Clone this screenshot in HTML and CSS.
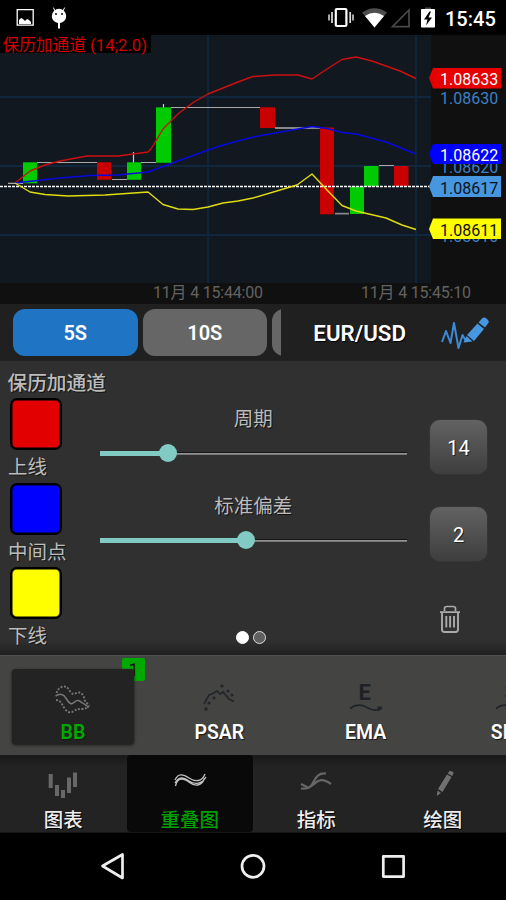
FILE: index.html
```html
<!DOCTYPE html>
<html lang="zh-CN">
<head>
<meta charset="utf-8">
<title>EUR/USD</title>
<link rel="stylesheet" href="styles.css">
</head>
<body>
<div class="app">
  <header class="status">
    <svg class="status-left" width="80" height="35" viewBox="0 0 80 35">
      <path d="M17.2 9.7h16v15.5h-16z" fill="none" stroke="#fff" stroke-width="1.3"/>
      <path d="M19 24v-4l2-2 2 1 2 2 2-2 2 1 2 2v2z" fill="#fff"/>
      <circle cx="59" cy="16" r="7.2" fill="#fff"/>
      <path d="M55 11l-1.6-3.4M63 11l1.6-3.4" stroke="#fff" stroke-width="1"/>
      <path d="M59 22v6.5" stroke="#fff" stroke-width="2"/>
      <path d="M55 14h2M61 14h2" stroke="#111" stroke-width="1.5"/>
    </svg>
    <svg class="status-right" width="112" height="35" viewBox="325 0 112 35">
      <rect x="335.8" y="9" width="10.6" height="17" rx="1" fill="none" stroke="#fff" stroke-width="2.2"/>
      <path d="M332 12v11M350.2 12v11" stroke="#ddd" stroke-width="1.7"/>
      <path d="M329 14.500v6M353 14.500v6" stroke="#ddd" stroke-width="1.5"/>
      <path d="M362 12.500Q374.500 4 387 12.500L374.500 27.500z" fill="#4d4d4d"/>
      <path d="M365 16Q374.500 9.500 384 16L374.500 27.500z" fill="#fff"/>
      <path d="M392.500 26.700H409V10z" fill="none" stroke="#484848" stroke-width="1.7"/>
      <path d="M425 7.500h6V10h-6z" fill="#4d4d4d"/>
      <rect x="421" y="9" width="14" height="18.500" rx=".8" fill="#fff"/>
      <path d="M429.500 11.500l-5.500 8h3.500l-1.500 6 6-8h-3.500l2.500-6z" fill="#000"/>
    </svg>
    <span class="clock">15:45</span>
  </header>

  <svg class="chart" width="506" height="269" viewBox="0 35 506 269">
    <rect y="35" width="506" height="269" fill="#101010"/>
    <rect y="35" width="431" height="248" fill="#111820"/>
    <path d="M0 97H431M0 166H431M0 235H431M208 35V283M416 35V283" stroke="#10273d" stroke-width="1.8"/>
    <rect y="35" width="151" height="18" fill="#000"/>
    <text x="2.500" y="50.500" class="study">保历加通道 (14;2.0)</text>
    <g stroke="#aaa" stroke-width="1.200">
      <path d="M8 183.300H23M37 162.500H97M112 179.500H127M141 162.500H156M171 107.500H260M379 165.500H394"/>
      <path d="M275 128H320M335 213.700H349" stroke="#888" stroke-width="1.800"/>
      <path d="M133.500 152v11M163.500 104v4" stroke="#ccc"/>
    </g>
    <g fill="#00ca00">
      <rect x="23" y="162.300" width="14" height="21"/>
      <rect x="127" y="162.300" width="14" height="17.500"/>
      <rect x="156" y="107.300" width="15" height="55.500"/>
      <rect x="350" y="186.500" width="14" height="27.500"/>
      <rect x="364" y="166" width="14.500" height="20.500"/>
    </g>
    <g fill="#ca0000">
      <rect x="97" y="162.300" width="14.300" height="17.500"/>
      <rect x="260" y="107.300" width="15" height="20.700"/>
      <rect x="320" y="127.500" width="14" height="86.800"/>
      <rect x="394" y="166" width="14.500" height="20.500"/>
    </g>
    <path d="M0 186.500H431" stroke="#fff" stroke-width="1.300" stroke-dasharray="3 1"/>
    <g fill="none" stroke-width="1.400" stroke-linejoin="round">
      <path stroke="#cd1010" d="M15 183L30 171 45 165 60 161 87 156H118L148 152 151 149 163 129 179 113 194 102 208 94 223 88 238 82 253 76.500 275 75H298L312 79 327 69 342 59.500 356 57 372 61 400 71 416 78.500"/>
      <path stroke="#0808df" stroke-width="1.500" d="M15 183L60 178 90 175.500 118 175 148 172 178 161 208 150 223 145 253 137 298 129 312 126.500 327 128.500 342 132.500 356 134 386 142 416 154"/>
      <path stroke="#e0dc0e" d="M15 183L30 192 45 194.500 68 196 105 195 148 192 163 204.500 178 209 193 209.500 208 207 223 203 238 201 253 198 297 185 312 174 327 190 342 205.500 356 211 386 218 402 225 416 229.500"/>
    </g>
    <g class="price" fill="#3c80c4">
      <text x="440" y="104">1.08630</text>
      <text x="440" y="173">1.08620</text>
      <text x="440" y="242">1.08610</text>
    </g>
    <g class="price">
      <path d="M429 78l4-10h68v20.500h-68z" fill="#e60000"/><text x="440" y="85" fill="#fff">1.08633</text>
      <path d="M429 154l4-10h68v20h-68z" fill="#00f"/><text x="440" y="160.500" fill="#fff">1.08622</text>
      <path d="M429 186.500l4-10.500h68v21h-68z" fill="#4696e0"/><text x="440" y="193.500" fill="#0a1420">1.08617</text>
      <path d="M429 229l4-10.500h68V239h-68z" fill="#ff0"/><text x="440" y="236" fill="#101000">1.08611</text>
    </g>
    <g class="axis">
      <text x="153" y="297.500" textLength="110">11月 4 15:44:00</text>
      <text x="361" y="297.500" textLength="110">11月 4 15:45:10</text>
    </g>
  </svg>

  <section class="intervals">
    <div class="choices">
      <div class="interval active">5S</div>
      <div class="interval">10S</div>
      <div class="interval"></div>
    </div>
    <div class="pair">EUR/USD</div>
    <svg width="50" height="40" viewBox="441 312 50 40">
      <path d="M443 341l4-11 4.500 12 3.500-20 4.500 25 4-13 4 7" fill="none" stroke="#3b8bd8" stroke-width="2" stroke-linejoin="round"/>
      <path d="M464.500 341.500l3-6.500 6 5.500z" fill="#4696e0"/>
      <path d="M468 334l10.500-11.500 6.500 5.500-10 12z" fill="#4696e0"/>
      <path d="M479.500 321.500l3.500-4q2-2 5 .5t1 4.500l-3 4z" fill="#4696e0"/>
    </svg>
  </section>

  <main class="panel">
    <h1>保历加通道</h1>
    <div class="settings">
      <div class="colors">
        <div class="swatch red"></div><div class="name">上线</div>
        <div class="swatch blue"></div><div class="name">中间点</div>
        <div class="swatch yellow"></div><div class="name">下线</div>
      </div>
      <div class="sliders">
        <div class="setting">
          <div class="caption">周期</div>
          <div class="track"><div class="fill" style="width:68px"></div><div class="thumb"></div><div class="rest"></div></div>
        </div>
        <div class="setting">
          <div class="caption">标准偏差</div>
          <div class="track"><div class="fill" style="width:146px"></div><div class="thumb"></div><div class="rest"></div></div>
        </div>
        <div class="dots"><i class="on"></i><i></i></div>
      </div>
      <div class="values">
        <div class="value">14</div>
        <div class="value">2</div>
        <svg width="24" height="32" viewBox="437 603 24 32" fill="none" stroke="#aaa">
          <path d="M443.500 611v-2.500q0-2 2.500-2h6q2.500 0 2.500 2v2.500M439 612.200h20" stroke-width="1.700"/>
          <path d="M441 612.500v17q0 2.500 2.500 2.500h11q2.500 0 2.500-2.500v-17" stroke-width="1.900"/>
          <path d="M445.300 616v11.500M449.100 616v11.500M453 616v11.500" stroke-width="1.900"/>
        </svg>
      </div>
    </div>
  </main>

  <section class="studies">
    <div class="badge">1</div>
    <div class="item selected">
      <svg width="40" height="34" viewBox="53 681 40 34" fill="none" stroke="#777">
        <path d="M56.500 692c1-3 3-6 7-6.500s5 3 7.500 6 5 0 8 0 5 4 5.500 7 4 4 4.500 7" stroke-width="1.900" stroke-dasharray="2 1.500"/>
        <path d="M56 699c5 0 6 5 9 9s6 4 9 2 5-2 8-2 4-1 6-2" stroke-width="1.900" stroke-dasharray="2 1.500"/>
        <path d="M55.500 695c5-3 8-2 11 3s5 6 8 3 5-1 8 1 4 2 6 5" stroke-width="1.500"/>
      </svg>
      <span>BB</span>
    </div>
    <div class="item">
      <svg width="40" height="34" viewBox="199 681 40 34">
        <path d="M204 703l5-9 3-1 5-3 3 3 3-2 6 7 5 2.500" fill="none" stroke="#22252a" stroke-width="1.700"/>
        <g fill="#22252a"><circle cx="206" cy="708" r="1.800"/><circle cx="209" cy="702" r="1.600"/><circle cx="214" cy="697" r="1.600"/><circle cx="222" cy="685" r="1.600"/><circle cx="228" cy="690" r="1.600"/><circle cx="232" cy="694" r="1.600"/></g>
      </svg>
      <span>PSAR</span>
    </div>
    <div class="item">
      <svg width="40" height="34" viewBox="345 681 40 34">
        <text x="357.500" y="699" class="letter">E</text>
        <path d="M349 707.500q8-6 17-1t15 .5" fill="none" stroke="#202329" stroke-width="1.700"/>
        <path d="M376 705.500l5.500 0-4 5z" fill="#202329"/>
      </svg>
      <span>EMA</span>
    </div>
    <div class="item">
      <svg width="40" height="34" viewBox="345 681 40 34">
        <text x="357.500" y="699" class="letter">S</text>
        <path d="M349 707.500q8-6 17-1t15 .5" fill="none" stroke="#202329" stroke-width="1.700"/>
      </svg>
      <span>SMA</span>
    </div>
  </section>

  <nav class="tabs">
    <div class="tab">
      <svg width="36" height="32" viewBox="45 769 36 32"><path d="M50.700 774v14M57 785v11M63 790v8M69 777.500v15.500M75 772.500v14.500" stroke="#686868" stroke-width="4"/></svg>
      <span>图表</span>
    </div>
    <div class="tab current">
      <svg width="36" height="32" viewBox="172 769 36 32" fill="none" stroke="#c2c2c2" stroke-width="1.300"><path d="M175 780c3-7 8-6 14-2s13 4 16-4M175 783c4-7 8-6 14-2s13 3 17-4M175.500 786c2-9 8-8 14-3.500s13 3 15-4.500"/></svg>
      <span>重叠图</span>
    </div>
    <div class="tab">
      <svg width="36" height="32" viewBox="298 769 36 32" fill="none" stroke="#666" stroke-width="2.200"><path d="M301 788.500c17 2 9-16 25-15M301 788.500c15 2 14-16 30-4.500M301 784l8 4"/></svg>
      <span>指标</span>
    </div>
    <div class="tab">
      <svg width="36" height="32" viewBox="425 769 36 32" fill="#707070"><path d="M438 789l9-14.500 4.500 2.500-9 15zM447.700 773.500l1.800-2.500q3-.5 4.200 2l-1.500 3zM437.500 790.500l3.500 2.500-4.200 3z"/></svg>
      <span>绘图</span>
    </div>
  </nav>

  <footer class="system">
    <svg width="506" height="67" viewBox="0 833 506 67" fill="none" stroke="#eee" stroke-width="2.700" stroke-linejoin="round">
      <path d="M102.500 866L122.500 854.500V878z"/>
      <circle cx="253" cy="866.300" r="11"/>
      <rect x="383.300" y="856.300" width="20.300" height="20.300"/>
    </svg>
  </footer>
</div>
</body>
</html>
```
FILE: styles.css
```css
* { box-sizing: border-box; }
body { margin: 0; background: #000; font-family: Roboto, "Noto Sans CJK SC", sans-serif; }
svg { display: block; flex: none; }
.app { width: 506px; height: 900px; overflow: hidden; display: flex; flex-direction: column; }
.app > * { flex: none; }

.status { height: 35px; display: flex; align-items: center; color: #fff; }
.status-right { margin-left: 245px; }
.clock { margin: 2px 0 0 8px; font-size: 20px; font-weight: 500; line-height: 24px; }

.study { font-size: 16.7px; fill: #d40000; }
.price { font-size: 16px; }
.axis { font-size: 16px; fill: #636363; }

.intervals { height: 57px; padding: 0 16px 0 13px; background: #202020; display: flex; align-items: center; }
.choices { width: 269px; display: flex; gap: 5px; overflow: hidden; }
.interval { flex: none; width: 124.500px; height: 47px; border-radius: 12px; background: #666; color: #fff; font-size: 20px; font-weight: 600; line-height: 49px; text-align: center; }
.interval.active { background: #2074c4; }
.pair { width: 157px; color: #fff; font-size: 22.300px; font-weight: 600; text-align: center; line-height: 30px; text-shadow: 1px 1px 1px #000; }
.intervals svg { margin-left: 2px; }

.panel { height: 294px; padding: 10px 0 0; background: linear-gradient(#303030 95%, #202020); color: #bcbcbc; }
h1 { margin: 0 0 1px 7.500px; font-size: 19.700px; font-weight: 500; line-height: 26px; text-shadow: 1px 1px 0 #111; }
.settings { display: flex; height: 257px; }
.colors { width: 99.500px; padding-left: 7px; }
.swatch { width: 52px; height: 52px; margin-left: 3px; border: 2.500px solid #000; border-radius: 7px; box-shadow: inset 0 0 0 .5px #000; }
.red { background: #e30000; }
.blue { background: #00f; }
.yellow { background: #ff0; }
.name { height: 32.500px; padding: 2px 0 0 1px; font-size: 19.500px; line-height: 32px; text-shadow: 1px 1px 0 #151515; }
.sliders { width: 307.500px; padding-top: 4px; display: flex; flex-direction: column; }
.setting { height: 87px; }
.caption { height: 31px; padding-top: 1.500px; font-size: 19.500px; line-height: 31px; text-align: center; text-shadow: 1px 1px 0 #111; }
.track { height: 40px; display: flex; align-items: center; }
.fill { height: 5px; background: #82cbc4; }
.thumb { width: 18px; height: 18px; margin: 0 -9px; border-radius: 50%; background: #82cbc4; z-index: 1; }
.rest { flex: 1; height: 2px; background: #929292; border-top: 1px solid #151515; box-shadow: 0 1px #777; }
.dots { display: flex; justify-content: center; gap: 4px; margin-top: 55px; padding-right: 4px; }
.dots i { width: 13px; height: 13px; border: 1.500px solid #ddd; border-radius: 50%; background: #606060; }
.dots .on { background: #fff; border-color: #fff; }
.values { padding: 22px 0 0 23px; }
.value { width: 57px; height: 54px; margin-bottom: 33px; border-radius: 10px; background: linear-gradient(#626262, #3e3e3e); box-shadow: 0 0 1px #666; color: #fff; font-size: 20px; line-height: 56px; text-align: center; text-shadow: 1px 1px 0 #222; }
.values svg { margin: 9px 0 0 8px; padding: 0; }
.value + svg { margin-top: 42px; }

.studies { height: 100px; background: #444542; display: flex; position: relative; padding: 13px 0 0 12px; overflow: hidden; border-top: 1px solid #505050; }
.item { flex: none; width: 122px; height: 75px; margin-right: 24.300px; padding-top: 13px; border-radius: 4px; color: #fff; display: flex; flex-direction: column; align-items: center; position: relative; }
.item span { font-size: 19.500px; font-weight: 600; line-height: 24px; margin-top: 4.500px; text-shadow: 1px 1px 1px #181818; }
.selected { background: #232323; box-shadow: 0 1px 3px #151515; }
.selected span { color: #00a900; }
.badge { position: absolute; left: 122px; top: 2px; width: 23px; height: 23px; border-radius: 2px; background: #00a900; color: #111; font-size: 18px; line-height: 23px; text-align: center; }
.letter { font: 700 22px Roboto, sans-serif; fill: #1e2125; }

.tabs { height: 78px; background: linear-gradient(#191919, #232323 12px); display: flex; border-bottom: 1px solid #141414; }
.tab { width: 126.500px; padding-top: 14px; color: #eee; display: flex; flex-direction: column; align-items: center; }
.current { background: #090909; color: #00a000; border-radius: 4px; }
.tab span { font-size: 19.500px; font-weight: 500; line-height: 28px; margin-top: 6px; text-shadow: 1px 1px 0 #000; }
.system { height: 67px; }
```
